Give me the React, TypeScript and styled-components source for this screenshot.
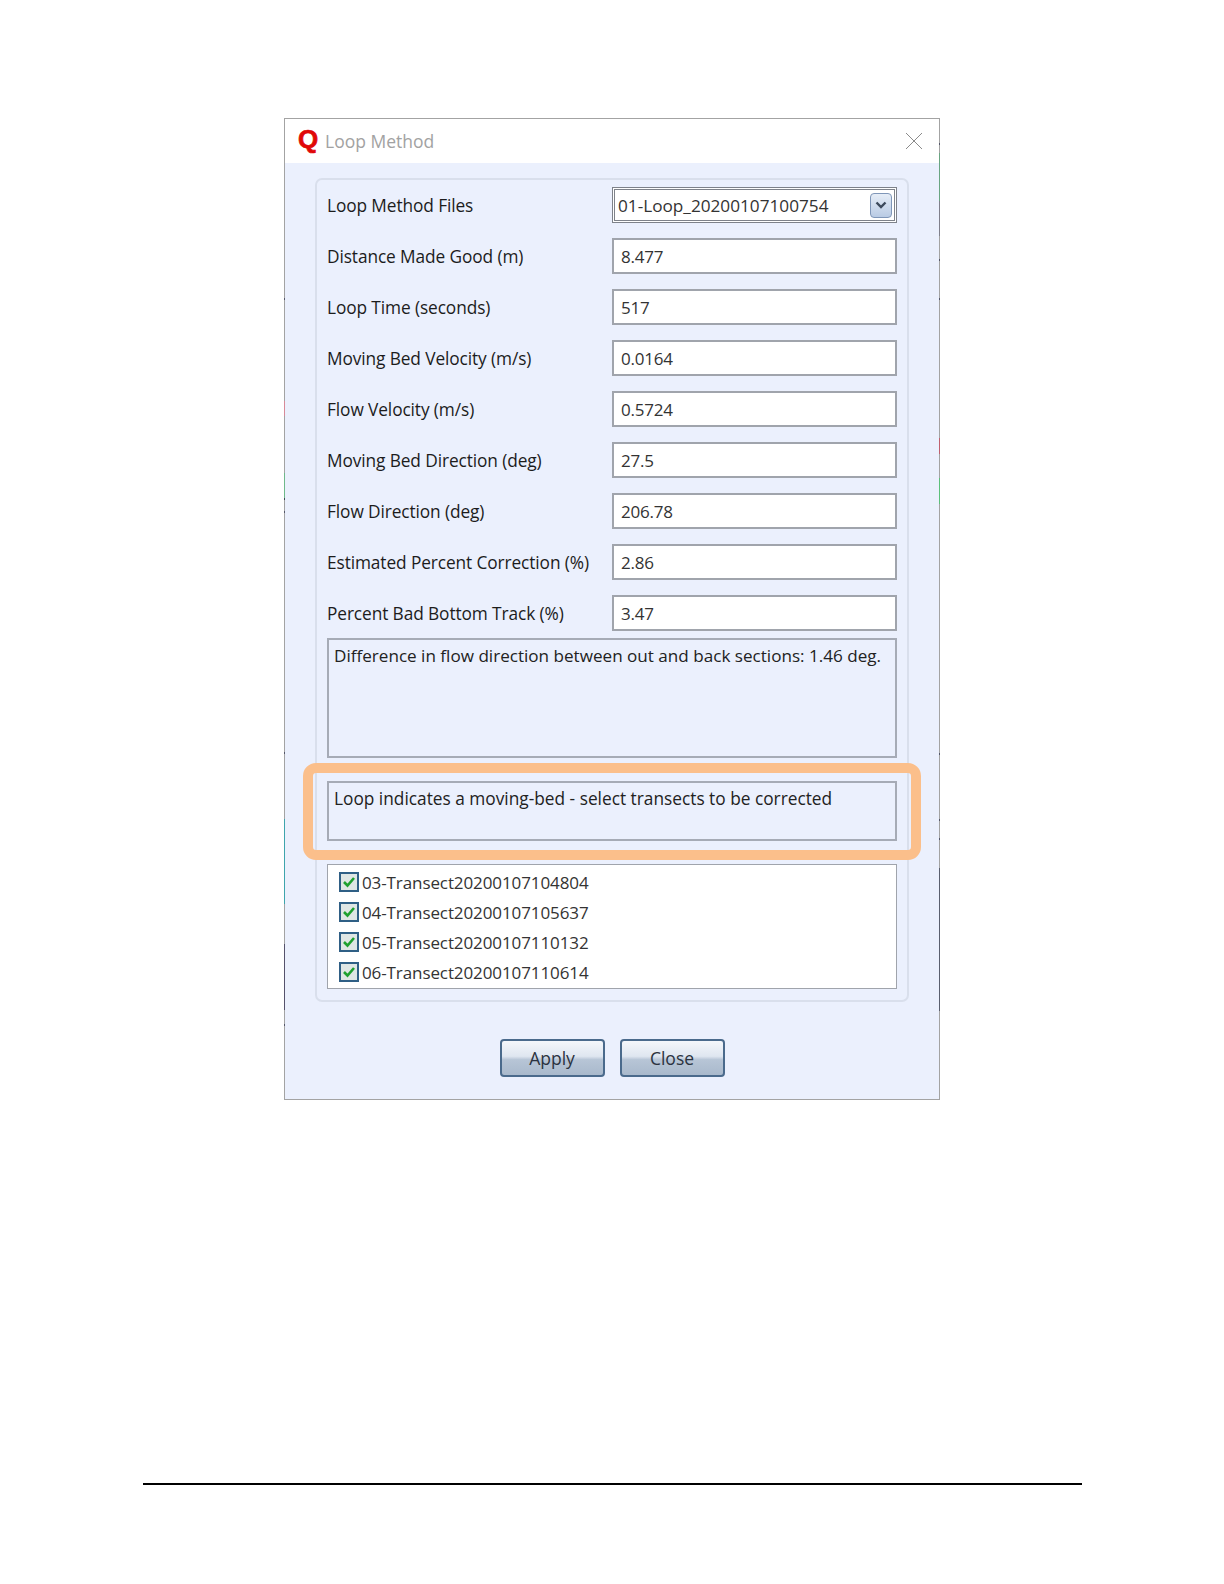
import React from "react";
import styled, { createGlobalStyle } from "styled-components";

const Global = createGlobalStyle`
  html, body { margin: 0; padding: 0; background: #fff; }
  body { font-family: "Open Sans", "Noto Sans", sans-serif; }
`;

const Page = styled.div`
  width: 1224px;
  height: 1584px;
  display: flex;
  flex-direction: column;
  padding: 118px 0 0 284px;
  box-sizing: border-box;
`;

const Dialog = styled.div`
  width: 656px;
  height: 982px;
  box-sizing: border-box;
  border: 1px solid #a3a3a3;
  background: #ebf0fd;
  display: flex;
  flex-direction: column;
  position: relative;
`;

const EdgeTick = styled.span<{ $side: "left" | "right"; $top: number; $h: number; $c: string }>`
  position: absolute;
  ${(p) => p.$side}: -1px;
  top: ${(p) => p.$top}px;
  width: 1px;
  height: ${(p) => p.$h}px;
  background: ${(p) => p.$c};
`;

const TitleBar = styled.div`
  height: 44px;
  flex: none;
  background: #fff;
  display: flex;
  align-items: center;
  padding: 0 16px 0 13px;
`;

const Logo = styled.span`
  font-family: "Liberation Sans", sans-serif;
  font-weight: 700;
  font-size: 26px;
  line-height: 1;
  color: #e00808;
  width: 27px;
  margin-top: -4px;
  -webkit-text-stroke: 0.7px #e00808;
`;

const Title = styled.span`
  font-size: 17.5px;
  color: #a2a2a2;
  flex: 1;
`;

const Group = styled.div`
  margin: 15px 0 0 30px;
  width: 594px;
  height: 824px;
  box-sizing: border-box;
  border: 2px solid #d9dfec;
  border-radius: 7px;
  padding: 7px 10px 0 10px;
  display: flex;
  flex-direction: column;
  position: relative;
`;

const Row = styled.div`
  height: 36px;
  margin-bottom: 15px;
  display: flex;
  align-items: center;
  justify-content: space-between;
  flex: none;
`;

const Label = styled.span`
  font-size: 17.3px;
  letter-spacing: -0.1px;
  color: #1c1c1c;
`;

const Field = styled.div`
  width: 285px;
  height: 36px;
  box-sizing: border-box;
  background: #fff;
  border: 2px solid #a0a4ac;
  padding-left: 7px;
  display: flex;
  align-items: center;
  font-size: 17px;
  letter-spacing: -0.2px;
  color: #333;
`;

const Combo = styled(Field)`
  border: 3px double #7e828a;
  padding: 0 2px 0 3px;
  justify-content: space-between;
  font-size: 17.2px;
  letter-spacing: 0;
`;

const ComboButton = styled.span`
  width: 22px;
  height: 25px;
  box-sizing: border-box;
  border: 1px solid #7f96b8;
  border-radius: 4px;
  background: linear-gradient(#e6edf7, #b9cbe4);
  display: flex;
  align-items: center;
  justify-content: center;
`;

const NoteBox = styled.div<{ $h: number; $mt: number; $size: number }>`
  height: ${(p) => p.$h}px;
  margin-top: ${(p) => p.$mt}px;
  box-sizing: border-box;
  border: 2px solid #a6abb6;
  padding: 5px 5px 4px;
  font-size: ${(p) => p.$size}px;
  line-height: 22px;
  color: #222;
  flex: none;
`;

const ListBox = styled.div`
  height: 125px;
  margin-top: 23px;
  box-sizing: border-box;
  background: #fff;
  border: 1px solid #a0a4ac;
  padding: 2px 0 0 11px;
  display: flex;
  flex-direction: column;
  flex: none;
`;

const ListRow = styled.div`
  height: 30px;
  display: flex;
  align-items: center;
  font-size: 17px;
  letter-spacing: -0.1px;
  color: #333;
`;

const Check = styled.span`
  width: 20px;
  height: 20px;
  flex: none;
  box-sizing: border-box;
  border: 2px solid #2f5f85;
  background: #dfe6e4;
  margin-right: 3px;
  display: flex;
  align-items: center;
  justify-content: center;
`;

const Highlight = styled.div`
  position: absolute;
  left: -14px;
  top: 583px;
  width: 618px;
  height: 97px;
  box-sizing: border-box;
  border: 10px solid #fbbf8b;
  border-radius: 13px;
`;

const Buttons = styled.div`
  margin-top: 37px;
  display: flex;
  justify-content: center;
  gap: 15px;
`;

const Button = styled.div`
  width: 105px;
  height: 38px;
  box-sizing: border-box;
  border: 2px solid #4a6a8c;
  border-radius: 4px;
  background: linear-gradient(#f4f7fb 0%, #dfe6f0 45%, #b7c5d6 55%, #a9b9cc 100%);
  display: flex;
  align-items: center;
  justify-content: center;
  font-size: 17.5px;
  color: #2b3340;
`;

const FooterRule = styled.div`
  position: absolute;
  left: 143px;
  top: 1483px;
  width: 939px;
  height: 2px;
  background: #000;
`;

const rows: [string, string][] = [
  ["Distance Made Good (m)", "8.477"],
  ["Loop Time (seconds)", "517"],
  ["Moving Bed Velocity (m/s)", "0.0164"],
  ["Flow Velocity (m/s)", "0.5724"],
  ["Moving Bed Direction (deg)", "27.5"],
  ["Flow Direction (deg)", "206.78"],
  ["Estimated Percent Correction (%)", "2.86"],
  ["Percent Bad Bottom Track (%)", "3.47"],
];

const transects = [
  "03-Transect20200107104804",
  "04-Transect20200107105637",
  "05-Transect20200107110132",
  "06-Transect20200107110614",
];

const ticks: ["left" | "right", number, number, string][] = [
  ["left", 179, 2, "#55586a"],
  ["left", 282, 15, "#d88a98"],
  ["left", 354, 25, "#6fb98a"],
  ["left", 379, 2, "#3f4a55"],
  ["left", 392, 2, "#55586a"],
  ["left", 633, 2, "#55586a"],
  ["left", 700, 85, "#3ea5ac"],
  ["left", 825, 66, "#55526c"],
  ["left", 905, 2, "#55586a"],
  ["right", 24, 2, "#55586a"],
  ["right", 34, 48, "#6aa582"],
  ["right", 82, 35, "#80808c"],
  ["right", 140, 2, "#55586a"],
  ["right", 179, 2, "#55586a"],
  ["right", 319, 16, "#c0606e"],
  ["right", 359, 26, "#5cc07a"],
  ["right", 634, 2, "#55586a"],
  ["right", 700, 2, "#55586a"],
  ["right", 719, 2, "#55586a"],
  ["right", 749, 143, "#5a5f6e"],
];

export default function App() {
  return (
    <Page>
      <Global />
      <Dialog>
        {ticks.map(([side, top, h, c]) => (
          <EdgeTick key={side + top} $side={side} $top={top} $h={h} $c={c} />
        ))}
        <TitleBar>
          <Logo>Q</Logo>
          <Title>Loop Method</Title>
          <svg width="18" height="18" viewBox="0 0 18 18">
            <path d="M1 1L17 17M17 1L1 17" stroke="#8a8a8a" strokeWidth="1" fill="none" />
          </svg>
        </TitleBar>
        <Group>
          <Row>
            <Label>Loop Method Files</Label>
            <Combo>
              <span>01-Loop_20200107100754</span>
              <ComboButton>
                <svg width="12" height="8" viewBox="0 0 12 8">
                  <path d="M1.5 1.5L6 6l4.5-4.5" stroke="#3d4a5c" strokeWidth="2.4" fill="none" />
                </svg>
              </ComboButton>
            </Combo>
          </Row>
          {rows.map(([l, v]) => (
            <Row key={l}>
              <Label>{l}</Label>
              <Field>{v}</Field>
            </Row>
          ))}
          <NoteBox $h={120} $mt={-8} $size={17.1}>
            Difference in flow direction between out and back sections: 1.46 deg.
          </NoteBox>
          <NoteBox $h={60} $mt={23} $size={17.3}>
            Loop indicates a moving-bed - select transects to be corrected
          </NoteBox>
          <ListBox>
            {transects.map((t) => (
              <ListRow key={t}>
                <Check>
                  <svg width="14" height="12" viewBox="0 0 14 12">
                    <path d="M2 6l3.5 3.5L12 2" stroke="#1fa02f" strokeWidth="2.6" fill="none" />
                  </svg>
                </Check>
                {t}
              </ListRow>
            ))}
          </ListBox>
          <Highlight />
        </Group>
        <Buttons>
          <Button>Apply</Button>
          <Button>Close</Button>
        </Buttons>
      </Dialog>
      <FooterRule />
    </Page>
  );
}
